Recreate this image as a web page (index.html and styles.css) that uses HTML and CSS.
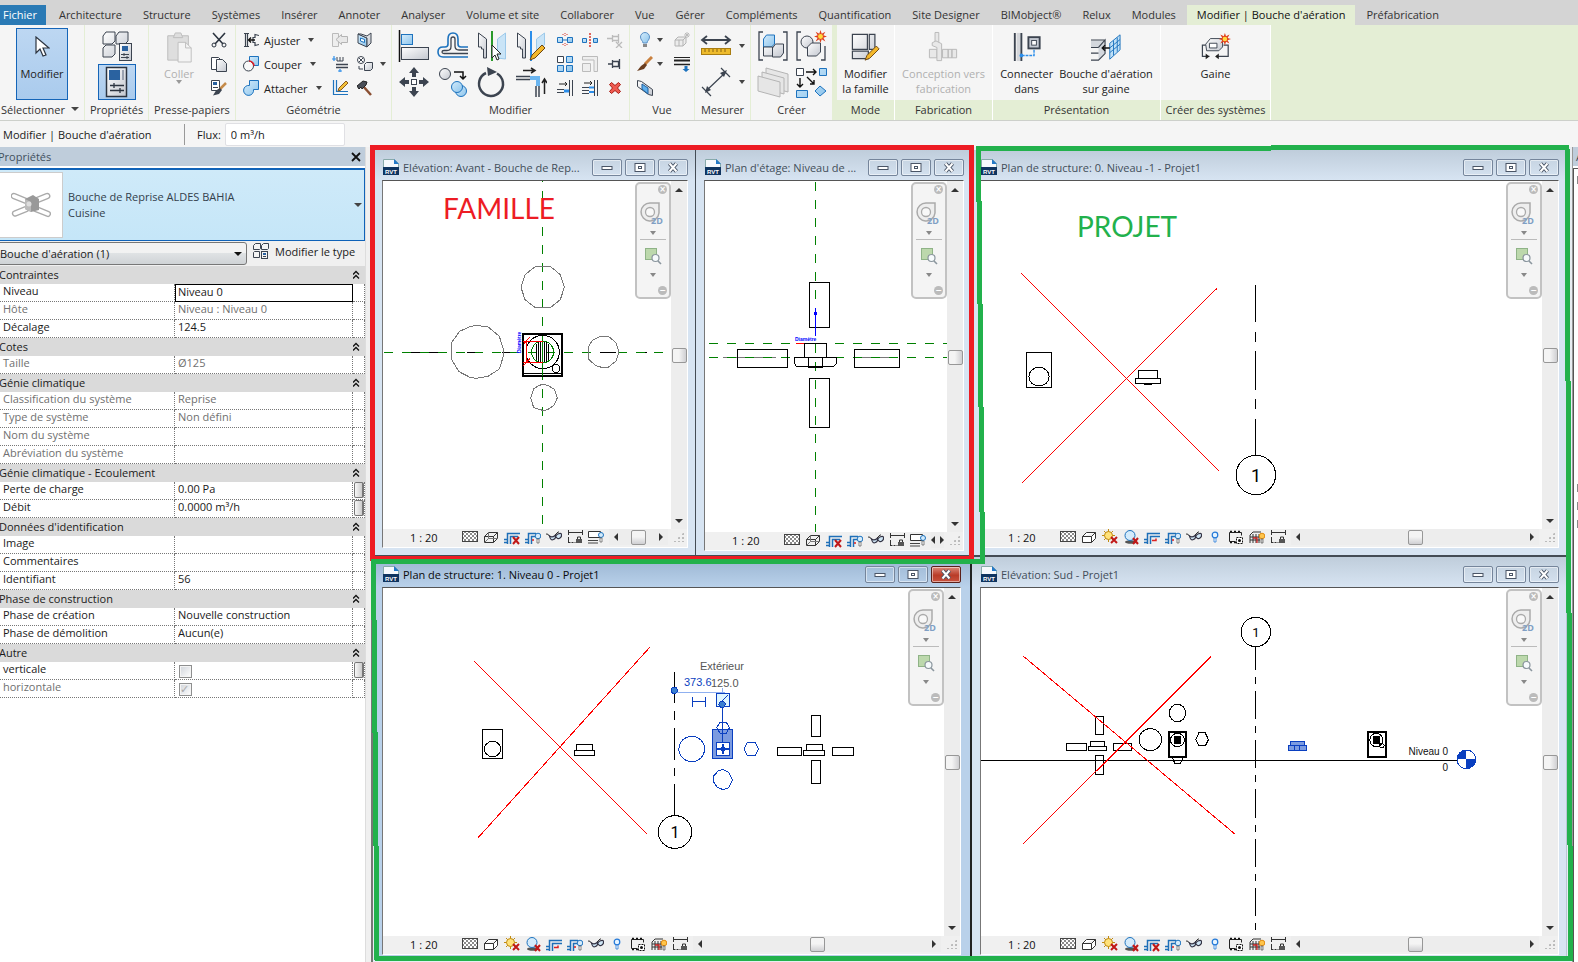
FILE: index.html
```html
<!DOCTYPE html>
<html lang="fr">
<head>
<meta charset="utf-8">
<title>Modifier | Bouche d'aération</title>
<link rel="stylesheet" href="styles.css">
</head>
<body>
<svg class="sprite" aria-hidden="true">
  <defs>
    <linearGradient id="g-grey" x1="0" y1="0" x2="1" y2="1"><stop offset="0" stop-color="#fff"/><stop offset="1" stop-color="#c3c7cf"/></linearGradient>
    <linearGradient id="g-blue" x1="0" y1="0" x2="1" y2="1"><stop offset="0" stop-color="#d5ecfb"/><stop offset="1" stop-color="#8cc4ec"/></linearGradient>
    <pattern id="p-hatch" width="4" height="4" patternUnits="userSpaceOnUse"><path d="M0 0h2v2H0zM2 2h2v2H2z" fill="#8a8a8a"/></pattern>
  </defs>
  <symbol id="cursor" viewBox="0 0 16 22"><path d="M2 1v16l4-4 3 7 3-1-3-7h6z" fill="#fff" stroke="#2c3440" stroke-width="1.2"/></symbol>
  <symbol id="types" viewBox="0 0 32 32"><g fill="url(#g-grey)" stroke="#3c4450"><path d="M2 6l3-4h9v9l-3 3H2zM15 6l3-4h9v9l-3 3h-9zM2 18l3-3h9v9l-3 3H2z"/><rect x="18.500" y="13.500" width="12" height="17"/></g><rect x="21" y="16" width="6" height="5" fill="#2a62a0"/><path d="M20 24.500h8M20 27.500h8M23 23v3M26 26v3" stroke="#3c4450" fill="none"/></symbol>
  <symbol id="types16" viewBox="0 0 16 16"><g fill="#f4f4f4" stroke="#3c4450"><path d="M.5 2.500l2-2h5v5l-1 1h-6zM8.500 2.500l2-2h5v5l-1 1h-6zM.5 9.500l1-1h5v6h-6z"/><rect x="8.500" y="8.500" width="6" height="7"/></g><path d="M10 10h3v2h-3z" fill="#2a62a0"/><path d="M10 13.500h3" stroke="#3c4450"/></symbol>
  <symbol id="props" viewBox="0 0 22 32"><rect x=".5" y="1.500" width="20" height="29" fill="url(#g-grey)" stroke="#2c3440" stroke-width="1.500"/><rect x="3" y="4" width="11" height="10" fill="#2a62a0"/><path d="M16 4h2v10h-2z" fill="#9aa2b0"/><path d="M4 19.500h14M4 24.500h14M8 17v5M14 22v5" stroke="#2c3440" stroke-width="1.300"/></symbol>
  <symbol id="paste" viewBox="0 0 32 34"><g fill="#dedede" stroke="#bdbdbd"><path d="M4 5h22v26H4z"/><path d="M10 7l2-5h6l2 5z"/><path d="M15 12h8l6 6v15H15z" fill="#f4f4f4"/><path d="M23 12v6h6" fill="none"/></g></symbol>
  <symbol id="cut" viewBox="0 0 16 16"><path d="M2 1l10 11M14 1L4 12" stroke="#2c3440" stroke-width="1.600"/><circle cx="3" cy="13" r="2" fill="none" stroke="#2c3440"/><circle cx="13" cy="13" r="2" fill="none" stroke="#2c3440"/></symbol>
  <symbol id="copy" viewBox="0 0 16 16"><path d="M.5 1.500h7l3 3v9H.5z" fill="#fff" stroke="#3c4450"/><path d="M5.500 3.500h6l4 4v8h-10z" fill="url(#g-grey)" stroke="#3c4450"/></symbol>
  <symbol id="match" viewBox="0 0 16 16"><path d="M.5.5h8v10h-8z" fill="#fff" stroke="#3c4450"/><path d="M2 2h4v3H2z" fill="#2a62a0"/><path d="M2 7.500h5" stroke="#3c4450"/><path d="M15 3l-6 6" stroke="#c58b4a" stroke-width="2.500"/><path d="M9 8l2 2-3 4-6 1.500 3-5z" fill="#3c4450"/></symbol>
  <symbol id="cope" viewBox="0 0 16 16"><path d="M1 1.500h5M1 14.500h5M2.500 1.500v13M4.500 1.500v13M16 3.500l-4-1v3h-2v5h2v3l4-1" fill="none" stroke="#3c4450" stroke-width="1.200"/><path d="M12 8H6M8 5.500L5.500 8 8 10.500" fill="none" stroke="#111" stroke-width="1.300"/></symbol>
  <symbol id="cutgeo" viewBox="0 0 16 16"><path d="M6.500.5h9v9h-9z" fill="url(#g-blue)" stroke="#1e73be"/><circle cx="5.500" cy="10" r="5" fill="#f8f8f8" stroke="#3c4450"/><path d="M6 5a5 5 0 015 5" fill="none" stroke="#e01b24" stroke-width="1.500"/></symbol>
  <symbol id="join" viewBox="0 0 16 16"><path d="M6.500.5h9v9h-5a5 5 0 11-4-4z" fill="url(#g-blue)" stroke="#1e73be"/></symbol>
  <symbol id="unjoin" viewBox="0 0 16 16"><path d="M.5 1.500h6v13h-6z" fill="#eee" stroke="#bbb"/><path d="M15.500 4.500h-6v-2L4 7.500l5.500 5v-2h6z" fill="#e8e8e8" stroke="#b4b4b4"/></symbol>
  <symbol id="wallface" viewBox="0 0 16 16"><path d="M1 2l9 4v9l-9-4z" fill="url(#g-blue)" stroke="#3c4450"/><path d="M1 2h3l6 2 4-3v10l-4 4V6z" fill="url(#g-grey)" stroke="#3c4450"/><path d="M3.500 6l4 1.500v3l-4-1.500z" fill="#fff" stroke="#1e73be"/></symbol>
  <symbol id="beam" viewBox="0 0 16 16"><path d="M5 1v4h6V1M8 1v4" stroke="#3c4450" fill="none"/><path d="M4 8.500h12M4 11.500h12" stroke="#3c4450" stroke-width="1.300"/><path d="M2 0v5M0 3h4M8 13v3M6 15h4" stroke="#2c8eea" stroke-width="1.200"/></symbol>
  <symbol id="split-face" viewBox="0 0 16 16"><circle cx="4" cy="4" r="3.500" fill="#fff" stroke="#3c4450"/><path d="M2 2l4 4M6 2L2 6M2 10v3h4" stroke="#3c4450" fill="none"/><path d="M7.500 8.500l2-2h6v6l-2 2h-6z" fill="url(#g-grey)" stroke="#3c4450"/></symbol>
  <symbol id="paint-edge" viewBox="0 0 16 16"><path d="M1.500 0v14.500H16M4.500 0v11.500H16" fill="none" stroke="#1e73be" stroke-width="1.200"/><path d="M14 1l2 2-7 7-3 1 1-3z" fill="#f3c13a" stroke="#8a5a1c"/></symbol>
  <symbol id="hammer" viewBox="0 0 16 16"><path d="M6 6l8 9" stroke="#8a4f32" stroke-width="2.500"/><path d="M0 6l6-5 4 1-1 3-4 4-1-2-2 2z" fill="#4a4f58" stroke="#222"/></symbol>
  <symbol id="align" viewBox="0 0 32 32"><path d="M1.500 0v32" stroke="#111" stroke-width="1.500"/><rect x="3.500" y="4.500" width="11" height="10" fill="url(#g-blue)" stroke="#1e73be"/><rect x="3.500" y="17.500" width="27" height="12" fill="url(#g-grey)" stroke="#3c4450"/></symbol>
  <symbol id="offset" viewBox="0 0 32 32"><path d="M31 27H6q-5 0-5-5t5-5h2q3 0 3-3V9q0-6 5-6t5 6v5q0 3 3 3h7" fill="none" stroke="#1e73be" stroke-width="1.600"/><path d="M31 23.500H7q-2 0-2-1.500t2-1.500h3q4 0 4-4V9q0-2 2-2t2 2v7q0 4 4 4h9" fill="none" stroke="#3c4450" stroke-width="1.300"/></symbol>
  <symbol id="mirror" viewBox="0 0 32 32"><path d="M2.500 3l8 6v19h-3V19h-2v-2h-3z" fill="url(#g-grey)" stroke="#3c4450"/><path d="M29.500 3l-8 6v19l8 1z" fill="#c9e4f7" stroke="#9cc9ea"/><path d="M16 1v30" stroke="#2a9a2a" stroke-width="2"/><path d="M16 15v13l3-3 2 5 2-1-2-5h4z" fill="#fff" stroke="#222"/></symbol>
  <symbol id="mirror2" viewBox="0 0 32 32"><path d="M2.500 3l8 6v19h-3V19h-2v-2h-3z" fill="url(#g-grey)" stroke="#3c4450"/><path d="M29.500 3l-8 6v12l8-6z" fill="#c9e4f7" stroke="#9cc9ea"/><path d="M16 1v30" stroke="#2c8eea" stroke-width="2"/><path d="M27 15l3 3-10 10-5 2 2-5z" fill="#f3b72a" stroke="#6b4512"/></symbol>
  <symbol id="move" viewBox="0 0 32 32"><g fill="#3c4450"><path d="M16 1l5 6h-3v4h-4V7h-3zM16 31l5-6h-3v-4h-4v4h-3zM1 16l6-5v3h4v4H7v3zM31 16l-6-5v3h-4v4h4v3z"/></g><rect x="13.500" y="13.500" width="5" height="5" fill="#fff" stroke="#3c4450"/></symbol>
  <symbol id="copyel" viewBox="0 0 32 32"><circle cx="8" cy="8" r="5.500" fill="url(#g-grey)" stroke="#3c4450"/><path d="M17 6h9v6M23 10l3 3 3-3" fill="none" stroke="#111" stroke-width="1.500"/><circle cx="24" cy="25" r="5.500" fill="url(#g-blue)" stroke="#1e73be"/><circle cx="20" cy="21" r="5.500" fill="url(#g-blue)" stroke="#1e73be"/></symbol>
  <symbol id="rotate" viewBox="0 0 32 32"><path d="M21 7.500A12 12 0 1110 7" fill="none" stroke="#3c4450" stroke-width="2.500"/><path d="M11 1l10 5-9 4z" fill="#3c4450"/></symbol>
  <symbol id="trim" viewBox="0 0 32 32"><path d="M8 4.500h12M16 2l4 2.500L16 7" stroke="#222" fill="none" stroke-width="1.500"/><path d="M1 10.500h14M1 13.500h14M21 20v11M24 20v11" stroke="#3c4450" stroke-width="1.500"/><path d="M15 12h8v8" fill="none" stroke="#6ab5f0" stroke-width="4"/><path d="M29.500 28V14M27 17l2.500-4 2.500 4" stroke="#222" fill="none" stroke-width="1.500"/></symbol>
  <symbol id="split" viewBox="0 0 16 16"><path d="M.5 5.500h5v5h-5zM10.500 5.500h5v5h-5z" fill="url(#g-blue)" stroke="#1e73be"/><path d="M6 8h4" stroke="#1e73be"/><path d="M8 1v4M8 11v4M6 2v2M10 2v2M6 12v2M10 12v2" stroke="#d9372c" stroke-dasharray="1 1"/></symbol>
  <symbol id="splitgap" viewBox="0 0 16 16"><path d="M.5 6.500h4v4h-4zM11.500 6.500h4v4h-4z" fill="url(#g-blue)" stroke="#1e73be"/><path d="M8 1v14" stroke="#d9372c" stroke-width="1.500" stroke-dasharray="2 1"/></symbol>
  <symbol id="unpin" viewBox="0 0 16 16"><path d="M0 6.500h5M5.500 3v7M5.500 4.500h6v4h-6M11.500 2v9M9 10l6 6M15 10l-6 6" stroke="#bbb" fill="none" stroke-width="1.300"/></symbol>
  <symbol id="array" viewBox="0 0 16 16"><path d="M.5.5h6v6h-6z" fill="#fff" stroke="#3c4450"/><path d="M9.500.5h6v6h-6zM.5 9.500h6v6h-6zM9.500 9.500h6v6h-6z" fill="url(#g-blue)" stroke="#1e73be"/></symbol>
  <symbol id="scale" viewBox="0 0 16 16"><path d="M.5.5h15v15H12V4H.5zM.5 7.500h8v8h-8z" fill="#eee" stroke="#bbb"/></symbol>
  <symbol id="pin" viewBox="0 0 16 16"><path d="M1 8h4M5.500 4v8M5.500 5.500h6v5h-6M12.500 3v10" stroke="#3c4450" fill="none" stroke-width="1.300"/></symbol>
  <symbol id="trim1" viewBox="0 0 16 16"><path d="M12.500 0v16M15.500 0v16M0 9.500h7M0 12.500h7" stroke="#3c4450"/><path d="M7 11h5" stroke="#2c8eea" stroke-width="3"/><path d="M2 4h8M8 2l2 2-2 2" stroke="#222" fill="none"/></symbol>
  <symbol id="trim2" viewBox="0 0 16 16"><path d="M12.500 0v16M15.500 0v16M0 7.500h7M0 10.500h7M0 13.500h7" stroke="#3c4450"/><path d="M7 7.500h5M7 12h5" stroke="#2c8eea" stroke-width="2"/><path d="M2 3h8M8 1l2 2-2 2" stroke="#222" fill="none"/></symbol>
  <symbol id="delete" viewBox="0 0 16 16"><path d="M4.500 2.500L8 5.500l3.500-3 2 2L10.500 8l3 3.500-2 2L8 10.500l-3.500 3-2-2L5.500 8l-3-3.500z" fill="#ef5a50" stroke="#a81c14"/></symbol>
  <symbol id="bulb" viewBox="0 0 16 16"><path d="M6 11c0-2-2.500-3-2.500-6a4.500 4.500 0 019 0c0 3-2.500 4-2.500 6z" fill="url(#g-blue)" stroke="#5a8fc4"/><path d="M6 12h4v3H6z" fill="#888"/></symbol>
  <symbol id="boxstar" viewBox="0 0 16 16"><path d="M1 8l3-3h8v6l-3 3H1zM1 8h8v6M9 8l3-3M5 8v6" fill="#ececec" stroke="#b4b4b4"/><path d="M13 0v6M10 3h6M11 1l4 4M15 1l-4 4" stroke="#bbb"/></symbol>
  <symbol id="brush" viewBox="0 0 16 16"><path d="M15 1L8 8" stroke="#c9803e" stroke-width="3"/><path d="M8 7l2 2-3 4-7 2 4-5z" fill="#6a3d1f"/></symbol>
  <symbol id="linew" viewBox="0 0 16 16"><path d="M0 1.500h16" stroke="#222"/><path d="M0 4.500h16" stroke="#222" stroke-width="2"/><path d="M0 8.500h16" stroke="#222" stroke-width="1.500"/><path d="M10.500 10h3v3h2L12 16l-3.500-3h2z" fill="#1e73be"/></symbol>
  <symbol id="section" viewBox="0 0 16 16"><path d="M.5.5l4 1 11 8v6l-4-1-11-8z" fill="url(#g-grey)" stroke="#3c4450"/><path d="M5 4l6 4v6L5 9z" fill="#5fb0ee" stroke="#1e5f9e"/></symbol>
  <symbol id="ruler" viewBox="0 0 32 32"><path d="M2 10h28M7 6l-5 4 5 4M25 6l5 4-5 4" stroke="#3c4450" stroke-width="1.800" fill="none"/><rect x="1.500" y="18.500" width="29" height="6" fill="#eebb2c" stroke="#a97d12"/><path d="M5 19v3M9 19v3M13 19v3M17 19v3M21 19v3M25 19v3" stroke="#8a6410"/></symbol>
  <symbol id="dim" viewBox="0 0 32 32"><path d="M6 25L26 6M2 21l9 9M21 2l9 9" stroke="#3c4450" stroke-width="1.200"/><path d="M5 27l2-7 4 4zM27 4l-7 3 4 4z" fill="#3c4450"/></symbol>
  <symbol id="group" viewBox="0 0 32 32"><path d="M6 2H2v28h4M26 2h4v28h-4" fill="none" stroke="#3c4450" stroke-width="1.300"/><path d="M6.500 9l3-4h8v9l-3 3h-8z" fill="url(#g-blue)" stroke="#1e73be"/><path d="M6.500 17h9v9h-9zM15.500 18l3-4h8v9l-3 4h-8z" fill="url(#g-grey)" stroke="#3c4450"/></symbol>
  <symbol id="newgroup" viewBox="0 0 32 32"><path d="M6 2H2v28h4M26 30h4V16" fill="none" stroke="#3c4450" stroke-width="1.300"/><circle cx="12" cy="12" r="6" fill="url(#g-grey)" stroke="#3c4450"/><path d="M12.500 17l4-4h9v9l-4 4h-9z" fill="url(#g-grey)" stroke="#3c4450"/><use href="#spark" x="19" y="0" width="13" height="13"/></symbol>
  <symbol id="spark" viewBox="0 0 16 16"><path d="M8 0l1.500 4.500L14 2l-2.500 4.500L16 8l-4.500 1.500L14 14l-4.500-2.500L8 16l-1.500-4.500L2 14l2.500-4.500L0 8l4.500-1.500L2 2l4.500 2.500z" fill="#e0401c"/><circle cx="8" cy="8" r="3" fill="#ffd93b"/></symbol>
  <symbol id="sheets" viewBox="0 0 32 32"><g fill="#e6e6e6" stroke="#b4b4b4"><path d="M9 2l22 6v18L9 20z"/><path d="M5 6l22 6v16L5 22z"/><path d="M1 10l22 6v15L1 25z"/></g></symbol>
  <symbol id="mapel" viewBox="0 0 32 32"><path d="M1.500 2.500h7v7h-7z" fill="#fff" stroke="#3c4450"/><path d="M24.500 2.500h7v7h-7zM1.500 24.500h11v7h-11zM25 20l6 5-6 5-5-5z" fill="url(#g-blue)" stroke="#1e73be"/><path d="M11 6h10M18 3l3 3-3 3M5 12v9M2 18l3 3 3-3M12 11l7 7M19 14v4h-4" fill="none" stroke="#111" stroke-width="1.400"/></symbol>
  <symbol id="editfam" viewBox="0 0 32 32"><path d="M1.500 2.500h16v16h-16zM19.500 2.500h6v16h-6zM1.500 20.500h17v8h-17z" fill="url(#g-grey)" stroke="#3c4450" stroke-width="1.300"/><path d="M27 15l3 3-10 10-5 2 2-5z" fill="#f3b72a" stroke="#6b4512"/></symbol>
  <symbol id="fab" viewBox="0 0 32 32"><g fill="#e8e8e8" stroke="#b8b8b8"><path d="M7.500.5h4v14h-4zM1.500 18.500h8v9h-8zM15.500 18.500h6v9h-6zM21.500 18.500h4v9h-4zM25.500 18.500h5v9h-5z"/><path d="M4.500 11.500l4-2 6 3v18h-5v-14l-5-2z"/></g></symbol>
  <symbol id="connect" viewBox="0 0 32 32"><path d="M5 1h4v30H5z" fill="#d4d6da"/><path d="M3 1v30M10 1v30" stroke="#3c4450" stroke-width="2"/><rect x="17.500" y="5.500" width="12" height="12" fill="#c5cad3" stroke="#3c4450" stroke-width="2"/><rect x="21" y="9" width="5" height="5" fill="#fff" stroke="#3c4450"/><path d="M23.500 19v6H10" stroke="#2c8eea" stroke-width="1.500" stroke-dasharray="3 1" fill="none"/><circle cx="10" cy="25" r="2" fill="#2c8eea"/></symbol>
  <symbol id="airterm" viewBox="0 0 32 32"><path d="M0 9h15v14l-7 7V17H0z" fill="#d3d7dd"/><path d="M0 8.500h15M0 16.500h8M0 22.500h8M0 30h8l7-7V8.500l-7 8" fill="none" stroke="#3c4450" stroke-width="1.200"/><path d="M20 12l11-9v16l-11 10z" fill="#bfe0f7" stroke="#1e73be"/><path d="M20 17l11-9M20 22l11-9M24 9v16M28 6v15" stroke="#1e73be"/><path d="M20 17h-8M15 14l-3 3 3 3" stroke="#111" fill="none" stroke-width="1.500"/></symbol>
  <symbol id="duct" viewBox="0 0 32 32"><path d="M5 13l5-6h13v9l-4 4H6z" fill="url(#g-grey)" stroke="#3c4450"/><path d="M9 12h8v5H9z" fill="#fff" stroke="#3c4450"/><path d="M5 14H1.500v12H9M24 14h5v12H16" fill="none" stroke="#3c4450" stroke-width="1.300"/><path d="M5 23l4 3-4 3zM19 23l-4 3 4 3z" fill="#222"/><use href="#spark" x="19" y="1" width="13" height="13"/></symbol>

  <symbol id="rvt" viewBox="0 0 16 16"><path d="M.5.5h11l4 4v11H.5z" fill="#f6f9fd" stroke="#8aa"/><path d="M11 0l5 5h-5z" fill="#2479c8"/><path d="M0 8h16v8H0z" fill="#0f3460"/></symbol>
  <symbol id="s-detail" viewBox="0 0 16 16"><rect x=".5" y="2.500" width="15" height="10" fill="#fff" stroke="#444"/><rect x="1" y="3" width="14" height="9" fill="url(#p-hatch)"/></symbol>
  <symbol id="s-box" viewBox="0 0 16 16"><path d="M1.500 7.500l4-4h9v6l-4 4h-9zM1.500 7.500h9l4-4M10.500 7.500v6" fill="none" stroke="#333"/><path d="M5.500 3.500v6h9M5.500 9.500l-4 4" fill="none" stroke="#777"/></symbol>
  <symbol id="s-solid" viewBox="0 0 16 16"><path d="M1.500 7.500l4-4h9v6l-4 4h-9zM1.500 7.500h9l4-4M10.500 7.500v6" fill="#fff" stroke="#333"/></symbol>
  <symbol id="s-sun" viewBox="0 0 16 16"><path d="M6.500 0v13M0 6.500h13M2 2l9 9M11 2l-9 9" stroke="#c08a10"/><circle cx="6.500" cy="6.500" r="4" fill="#ffe27a" stroke="#c08a10"/><path d="M9 8l6 6M15 8l-6 6" stroke="#c01818" stroke-width="2"/></symbol>
  <symbol id="s-shadow" viewBox="0 0 16 16"><ellipse cx="8" cy="13" rx="6" ry="1.800" fill="#555"/><circle cx="7" cy="6.500" r="5" fill="#d4ebfb" stroke="#1e73be"/><path d="M10 9l5 6M15 9l-5 6" stroke="#c01818" stroke-width="2"/></symbol>
  <symbol id="s-crop" viewBox="0 0 16 16"><path d="M3.500 15V4.500H16M6.500 15V7.500H16M0 10.500h3M0 13.500h3" fill="none" stroke="#1e6fb8" stroke-width="1.500"/><path d="M8 11.500h4v-2" stroke="#d22" stroke-width="1.500" fill="none"/></symbol>
  <symbol id="s-cropx" viewBox="0 0 16 16"><path d="M3.500 15V4.500H16M6.500 15V7.500H14M0 10.500h3M0 13.500h3" fill="none" stroke="#1e6fb8" stroke-width="1.500"/><path d="M9 8l6 7M15 8l-6 7" stroke="#c01818" stroke-width="2"/></symbol>
  <symbol id="s-cropb" viewBox="0 0 16 16"><path d="M3.500 15V4.500H11M6.500 15V7.500H10M0 10.500h3M0 13.500h3" fill="none" stroke="#1e6fb8" stroke-width="1.500"/><path d="M7 11h2" stroke="#d22" stroke-width="1.500"/><circle cx="13" cy="7" r="2.800" fill="#d4ebfb" stroke="#1e73be"/><path d="M12 10h2v4h-2z" fill="#fff" stroke="#555" stroke-width=".7"/></symbol>
  <symbol id="s-glass" viewBox="0 0 16 16"><path d="M0 5q2-1 4 3M9 6l3-3h1" stroke="#333" fill="none"/><path d="M3.500 7q1 5 4 3.500t1.500-4q-3 2.500-5.500.5zM9.500 7q2 4 4.500 2t1-4.500q-3-.5-5.500 2.500z" fill="#cfe6f6" stroke="#334" stroke-width="1.200"/></symbol>
  <symbol id="s-bulb" viewBox="0 0 16 16"><circle cx="8" cy="6" r="2.800" fill="#e6f4ff" stroke="#2479d8" stroke-width="1.200"/><path d="M7 9h2v4H7z" fill="#fff" stroke="#2479d8" stroke-width=".8"/></symbol>
  <symbol id="s-film" viewBox="0 0 16 16"><path d="M1.500 3.500h12v3M1.500 3.500v9h6" stroke="#222" fill="none"/><path d="M2 2.500h12M2 13.500h6" stroke="#111" stroke-width="1.500" stroke-dasharray="2 2" fill="none"/><rect x="8.500" y="8.500" width="6" height="6" fill="#fff" stroke="#111" stroke-dasharray="2 1"/><circle cx="11.500" cy="11.500" r="1.500" fill="#111"/></symbol>
  <symbol id="s-fence" viewBox="0 0 16 16"><path d="M1 14V6l3-3h8M4 14V5M7 14V5M10 14V5M1 8h10M1 11h10" stroke="#333" fill="none"/><path d="M4 9h4v5" stroke="#c22" fill="none" stroke-width="1.300"/><circle cx="13" cy="7" r="2.800" fill="#ffc54a" stroke="#e08a10"/><path d="M12 10h2v4h-2z" fill="#ddd" stroke="#555" stroke-width=".7"/></symbol>
  <symbol id="s-lock" viewBox="0 0 16 16"><path d="M1.500 1v5M15.500 1v5M2 3.500h13M1.500 8v6" stroke="#333" fill="none"/><path d="M1.500 13.500h7" stroke="#333" stroke-dasharray="2 1"/><path d="M9 10h6v4H9z" fill="#555"/><path d="M10.500 10V8h3v2" stroke="#333" fill="none"/></symbol>
  <symbol id="s-prop" viewBox="0 0 16 16"><path d="M.5 2.500h12v6H.5z" fill="#fff" stroke="#333"/><path d="M0 11.500h10M0 14h10" stroke="#444"/><circle cx="13" cy="6" r="2.500" fill="#d4ebfb" stroke="#1e73be"/><path d="M12 9h2v4h-2z" fill="#fff" stroke="#555" stroke-width=".7"/></symbol>

  <symbol id="w-min" viewBox="0 0 28 15"><rect x="9" y="6.500" width="10" height="3" fill="#fff" stroke="#4a5566"/></symbol>
  <symbol id="w-max" viewBox="0 0 28 15"><rect x="9" y="3.500" width="10" height="8" fill="#fff" stroke="#4a5566"/><rect x="12.500" y="6.500" width="3" height="2" fill="#fff" stroke="#4a5566"/></symbol>
  <symbol id="w-close" viewBox="0 0 28 15"><path d="M10.500 3.500l7 8M17.500 3.500l-7 8" stroke="#4a5566" stroke-width="4"/><path d="M10.500 3.500l7 8M17.500 3.500l-7 8" stroke="#fff" stroke-width="2"/></symbol>
  <symbol id="chev" viewBox="0 0 8 10"><path d="M1 4.500l3-3 3 3M1 8.500l3-3 3 3" fill="none" stroke="#111" stroke-width="1.300"/></symbol>
  <symbol id="wheel" viewBox="0 0 26 24"><path d="M10 1h9v10a9 9 0 11-9-10z" fill="#eee" stroke="#aaa" stroke-width="1.500"/><circle cx="10" cy="10" r="4.500" fill="#f8f8f8" stroke="#aaa" stroke-width="1.300"/></symbol>
  <symbol id="zoomsq" viewBox="0 0 18 18"><rect x="1.500" y="1.500" width="11" height="11" fill="#bcd8ac" stroke="#8fb387"/><circle cx="11.500" cy="11" r="3.500" fill="#f6fafc" stroke="#8b969e" stroke-width="1.200"/><path d="M14 14l3 3" stroke="#8b969e" stroke-width="1.600"/></symbol>
</svg>

<nav class="tabs" aria-label="Ruban">
  <button class="tab file">Fichier</button><button class="tab">Architecture</button><button class="tab">Structure</button><button class="tab">Systèmes</button><button class="tab">Insérer</button><button class="tab">Annoter</button><button class="tab">Analyser</button><button class="tab">Volume et site</button><button class="tab">Collaborer</button><button class="tab">Vue</button><button class="tab">Gérer</button><button class="tab">Compléments</button><button class="tab">Quantification</button><button class="tab">Site Designer</button><button class="tab">BIMobject®</button><button class="tab">Relux</button><button class="tab">Modules</button><button class="tab current">Modifier | Bouche d'aération</button><button class="tab">Préfabrication</button>
</nav>

<div class="ribbon">
  <section class="panel">
    <div class="tools center"><button class="big pressed"><svg class="i-cur"><use href="#cursor"/></svg><span>Modifier</span></button></div>
    <h2 class="select-title">Sélectionner <i class="tri"></i></h2>
  </section>
  <section class="panel">
    <div class="tools stack"><button class="large" aria-label="Propriétés du type"><svg><use href="#types"/></svg></button><button class="large pressed" aria-label="Propriétés"><svg><use href="#props"/></svg></button></div>
    <h2>Propriétés</h2>
  </section>
  <section class="panel">
    <div class="tools paste-tools"><button class="big off"><svg class="i32"><use href="#paste"/></svg><span>Coller</span><i class="tri"></i></button>
      <div class="col"><button class="small" aria-label="Couper"><svg><use href="#cut"/></svg></button><button class="small" aria-label="Copier"><svg><use href="#copy"/></svg></button><button class="small" aria-label="Copier le type"><svg><use href="#match"/></svg></button></div></div>
    <h2>Presse-papiers</h2>
  </section>
  <section class="panel">
    <div class="tools geo-tools">
      <div class="col wide"><button class="line"><svg><use href="#cope"/></svg>Ajuster<i class="tri"></i></button><button class="line"><svg><use href="#cutgeo"/></svg>Couper<i class="tri"></i></button><button class="line"><svg><use href="#join"/></svg>Attacher<i class="tri"></i></button></div>
      <div class="col"><button class="small" aria-label="Détacher"><svg><use href="#unjoin"/></svg></button><button class="small" aria-label="Poutre"><svg><use href="#beam"/></svg></button><button class="small" aria-label="Peindre"><svg><use href="#paint-edge"/></svg></button></div>
      <div class="col"><button class="small" aria-label="Face"><svg><use href="#wallface"/></svg></button><button class="small" aria-label="Scinder la face"><svg><use href="#split-face"/></svg></button><button class="small" aria-label="Démolir"><svg><use href="#hammer"/></svg></button></div>
      <i class="tri"></i>
    </div>
    <h2>Géométrie</h2>
  </section>
  <section class="panel">
    <div class="tools modify-tools">
      <div class="larges"><button class="large" aria-label="Aligner"><svg><use href="#align"/></svg></button><button class="large" aria-label="Décaler"><svg><use href="#offset"/></svg></button><button class="large" aria-label="Symétrie par axe"><svg><use href="#mirror"/></svg></button><button class="large" aria-label="Symétrie dessinée"><svg><use href="#mirror2"/></svg></button><button class="large" aria-label="Déplacer"><svg><use href="#move"/></svg></button><button class="large" aria-label="Copier"><svg><use href="#copyel"/></svg></button><button class="large" aria-label="Rotation"><svg><use href="#rotate"/></svg></button><button class="large" aria-label="Ajuster en angle"><svg><use href="#trim"/></svg></button></div>
      <div class="smalls"><button class="small" aria-label="Scinder"><svg><use href="#split"/></svg></button><button class="small" aria-label="Scinder avec espace"><svg><use href="#splitgap"/></svg></button><button class="small" aria-label="Déverrouiller"><svg><use href="#unpin"/></svg></button><button class="small" aria-label="Réseau"><svg><use href="#array"/></svg></button><button class="small" aria-label="Echelle"><svg><use href="#scale"/></svg></button><button class="small" aria-label="Verrouiller"><svg><use href="#pin"/></svg></button><button class="small" aria-label="Prolonger"><svg><use href="#trim1"/></svg></button><button class="small" aria-label="Prolonger plusieurs"><svg><use href="#trim2"/></svg></button><button class="small" aria-label="Supprimer"><svg><use href="#delete"/></svg></button></div>
    </div>
    <h2>Modifier</h2>
  </section>
  <section class="panel">
    <div class="tools view-tools"><button class="small" aria-label="Masquer"><svg><use href="#bulb"/></svg></button><i class="tri"></i><button class="small" aria-label="Zone de sélection"><svg><use href="#boxstar"/></svg></button><button class="small" aria-label="Remplacer"><svg><use href="#brush"/></svg></button><i class="tri"></i><button class="small" aria-label="Lignes"><svg><use href="#linew"/></svg></button><button class="small" aria-label="Coupe"><svg><use href="#section"/></svg></button></div>
    <h2>Vue</h2>
  </section>
  <section class="panel">
    <div class="tools measure-tools"><button class="large" aria-label="Mesurer"><svg><use href="#ruler"/></svg></button><i class="tri"></i><button class="large" aria-label="Cote"><svg><use href="#dim"/></svg></button><i class="tri"></i></div>
    <h2>Mesurer</h2>
  </section>
  <section class="panel">
    <div class="tools create-tools"><button class="large" aria-label="Groupe"><svg><use href="#group"/></svg></button><button class="large" aria-label="Créer similaire"><svg><use href="#newgroup"/></svg></button><button class="large" aria-label="Assemblage"><svg><use href="#sheets"/></svg></button><button class="large" aria-label="Pièces"><svg><use href="#mapel"/></svg></button></div>
    <h2>Créer</h2>
  </section>
  <section class="panel context">
    <div class="tools center"><button class="big"><svg class="i32"><use href="#editfam"/></svg><span>Modifier<br>la famille</span></button></div>
    <h2>Mode</h2>
  </section>
  <section class="panel context">
    <div class="tools center"><button class="big off"><svg class="i32"><use href="#fab"/></svg><span>Conception vers<br>fabrication</span></button></div>
    <h2>Fabrication</h2>
  </section>
  <section class="panel context">
    <div class="tools center"><button class="big"><svg class="i32"><use href="#connect"/></svg><span>Connecter<br>dans</span></button><button class="big"><svg class="i32"><use href="#airterm"/></svg><span>Bouche d'aération<br>sur gaine</span></button></div>
    <h2>Présentation</h2>
  </section>
  <section class="panel context">
    <div class="tools center"><button class="big"><svg class="i32"><use href="#duct"/></svg><span>Gaine</span></button></div>
    <h2>Créer des systèmes</h2>
  </section>
</div>

<div class="options"><span class="mode">Modifier | Bouche d'aération</span><label for="flux">Flux:</label><input id="flux" type="text" value="0 m³/h"></div>

<main class="main">
  <aside class="props">
    <header class="dock-title"><h2>Propriétés</h2><button aria-label="Fermer"><svg viewBox="0 0 10 10"><path d="M1 1l8 8M9 1L1 9" stroke="#111" stroke-width="1.800"/></svg></button></header>
    <button class="type">
      <span class="thumb"><svg viewBox="0 0 40 26"><g fill="#fff" stroke="#aaa" stroke-width="1.400"><rect x="0" y="4" width="18" height="5" rx="2.500" transform="rotate(22 9 6)"/><rect x="22" y="4" width="17" height="5" rx="2.500" transform="rotate(-22 30 6)"/><rect x="1" y="17" width="17" height="5" rx="2.500" transform="rotate(-22 9 19)"/><rect x="22" y="17" width="18" height="5" rx="2.500" transform="rotate(22 31 19)"/></g><path d="M14 7l8-4 6 4v11l-8 2-6-3z" fill="#999"/><path d="M14 7l6 3v10l-6-3z" fill="#bbb"/><circle cx="18" cy="12" r="2.500" fill="#ddd"/></svg></span>
      <span class="type-name">Bouche de Reprise ALDES BAHIA<br>Cuisine</span><i class="tri"></i>
    </button>
    <div class="filter">
      <span class="combo"><select aria-label="Filtre de catégorie"><option>Bouche d'aération (1)</option></select><i class="tri"></i></span>
      <button class="edit-type"><svg><use href="#types16"/></svg>Modifier le type</button>
    </div>
    <table class="params">
      <colgroup><col class="c-name"><col><col class="c-btn"></colgroup>
      <tbody>
      <tr class="group"><th colspan="2">Contraintes</th><td><svg><use href="#chev"/></svg></td></tr>
      <tr><th><label for="p1">Niveau</label></th><td class="focus"><input id="p1" value="Niveau 0"></td><td></td></tr>
      <tr class="ro"><th>Hôte</th><td>Niveau : Niveau 0</td><td></td></tr>
      <tr><th><label for="p2">Décalage</label></th><td><input id="p2" value="124.5"></td><td></td></tr>
      <tr class="group"><th colspan="2">Cotes</th><td><svg><use href="#chev"/></svg></td></tr>
      <tr class="ro"><th>Taille</th><td>Ø125</td><td></td></tr>
      <tr class="group"><th colspan="2">Génie climatique</th><td><svg><use href="#chev"/></svg></td></tr>
      <tr class="ro"><th>Classification du système</th><td>Reprise</td><td></td></tr>
      <tr class="ro"><th>Type de système</th><td>Non défini</td><td></td></tr>
      <tr class="ro"><th>Nom du système</th><td></td><td></td></tr>
      <tr class="ro"><th>Abréviation du système</th><td></td><td></td></tr>
      <tr class="group"><th colspan="2">Génie climatique - Ecoulement</th><td><svg><use href="#chev"/></svg></td></tr>
      <tr><th><label for="p3">Perte de charge</label></th><td><input id="p3" value="0.00 Pa"></td><td><button class="assoc" aria-label="Associer la perte de charge"></button></td></tr>
      <tr><th><label for="p4">Débit</label></th><td><input id="p4" value="0.0000 m³/h"></td><td><button class="assoc" aria-label="Associer le débit"></button></td></tr>
      <tr class="group"><th colspan="2">Données d'identification</th><td><svg><use href="#chev"/></svg></td></tr>
      <tr><th><label for="p5">Image</label></th><td><input id="p5"></td><td></td></tr>
      <tr><th><label for="p6">Commentaires</label></th><td><input id="p6"></td><td></td></tr>
      <tr><th><label for="p7">Identifiant</label></th><td><input id="p7" value="56"></td><td></td></tr>
      <tr class="group"><th colspan="2">Phase de construction</th><td><svg><use href="#chev"/></svg></td></tr>
      <tr><th><label for="p8">Phase de création</label></th><td><input id="p8" value="Nouvelle construction"></td><td></td></tr>
      <tr><th><label for="p9">Phase de démolition</label></th><td><input id="p9" value="Aucun(e)"></td><td></td></tr>
      <tr class="group"><th colspan="2">Autre</th><td><svg><use href="#chev"/></svg></td></tr>
      <tr><th><label for="p10">verticale</label></th><td><input id="p10" type="checkbox"></td><td><button class="assoc" aria-label="Associer verticale"></button></td></tr>
      <tr class="ro"><th><label for="p11">horizontale</label></th><td><input id="p11" type="checkbox" checked disabled></td><td></td></tr>
      </tbody>
    </table>
  </aside>

  <div class="mdi">
    <section class="win w1">
      <header class="bar"><svg class="doc"><use href="#rvt"/><text x="8" y="15">RVT</text></svg><h3>Elévation: Avant - Bouche de Rep...</h3><button aria-label="Réduire"><svg><use href="#w-min"/></svg></button><button aria-label="Agrandir"><svg><use href="#w-max"/></svg></button><button aria-label="Fermer"><svg><use href="#w-close"/></svg></button></header>
      <div class="client">
        <div class="view">
          <svg class="canvas"><g transform="translate(-13 -36) scale(.33333)">
            <path class="ref" d="M42 622H880M518 84V1140"/>
            <path class="ink" d="M123 622h27M177 622h27M290 622h25M395 622h25M690 622h48M825 622h6"/>
            <g class="soft"><path d="M497 364h44l30 25 12 38-12 37-30 24h-45l-31-24-12-37 12-38zM300 545l20-4 35 5 33 28 12 38v22l-12 38-34 22-35 6-17-2-35-18-22-36V592l24-33zM686 576l15-3 17 3 20 17 9 28-9 27-22 18-17 2-22-6-22-20V606l12-20zM507 721l14-3 12 3 20 12 9 25-9 22-20 14-12 3-30-9-9-30 9-26z"/></g>
            <rect x="460" y="567" width="117" height="126" class="ink2"/><path class="ink" d="M460 687h117"/>
            <circle cx="518" cy="621" r="50" class="ink"/><circle cx="558" cy="670" r="12" class="ink"/>
            <path class="ink" d="M499 597v48M505 592v58M511 590v62M524 590v62M530 592v58M536 597v48"/>
            <circle cx="518" cy="621" r="33" class="refc"/><path class="refc" d="M518 572v120"/>
            <path class="red" d="M460 590h58M460 653h58M470 590v63M462 596l18-20M460 662l20-22"/>
          </g><text x="0" y="0" transform="translate(138 172) rotate(-90)" class="tiny">Diamètre</text></svg>
          <strong class="stamp famille">FAMILLE</strong>
          <div class="navbar"><i class="dot">×</i><svg class="wheel"><use href="#wheel"/><text x="11" y="22">2D</text></svg><i class="tri"></i><hr><svg class="zsq"><use href="#zoomsq"/></svg><i class="tri"></i><i class="dot last">−</i></div>
        </div>
        <div class="vscroll"><i class="up"></i><i class="knob"></i><i class="down"></i></div>
        <footer class="status"><span>1 : 20</span><svg><use href="#s-detail"/></svg><svg><use href="#s-box"/></svg><svg><use href="#s-cropx"/></svg><svg><use href="#s-cropb"/></svg><svg><use href="#s-glass"/></svg><svg><use href="#s-lock"/></svg><svg><use href="#s-prop"/></svg><div class="hscroll"><i class="left"></i><i class="knob"></i><i class="right"></i></div><i class="grip"></i></footer>
      </div>
    </section>

    <section class="win w2">
      <header class="bar"><svg class="doc"><use href="#rvt"/><text x="8" y="15">RVT</text></svg><h3>Plan d'étage: Niveau de ...</h3><button aria-label="Réduire"><svg><use href="#w-min"/></svg></button><button aria-label="Agrandir"><svg><use href="#w-max"/></svg></button><button aria-label="Fermer"><svg><use href="#w-close"/></svg></button></header>
      <div class="client">
        <div class="view">
          <svg class="canvas"><g transform="translate(-15 -36) scale(.33333)">
            <path class="ref" d="M57 595H771M57 637H771M376 111V1160"/>
            <path class="soft" d="M98 637h13M138 637h27M192 637h27M246 637h12M516 637h27M570 637h27"/>
            <g class="ink"><rect x="358" y="412" width="61" height="136"/><rect x="142" y="613" width="151" height="54"/><rect x="493" y="613" width="136" height="54"/><rect x="358" y="700" width="61" height="147"/><path d="M343 637v-42h67v42M313 637h126v18l-8 10H320l-7-10zM355 637h43v30h-43z"/></g>
            <path class="blue" d="M376 490v82"/><rect x="372" y="501" width="9" height="9" fill="#00f"/><path class="red" d="M318 595h25"/>
          </g><text x="90" y="160" class="tiny">Diamètre</text></svg>
          <div class="navbar"><i class="dot">×</i><svg class="wheel"><use href="#wheel"/><text x="11" y="22">2D</text></svg><i class="tri"></i><hr><svg class="zsq"><use href="#zoomsq"/></svg><i class="tri"></i><i class="dot last">−</i></div>
        </div>
        <div class="vscroll"><i class="up"></i><i class="knob"></i><i class="down"></i></div>
        <footer class="status"><span>1 : 20</span><svg><use href="#s-detail"/></svg><svg><use href="#s-box"/></svg><svg><use href="#s-cropx"/></svg><svg><use href="#s-cropb"/></svg><svg><use href="#s-glass"/></svg><svg><use href="#s-lock"/></svg><svg><use href="#s-prop"/></svg><div class="hscroll tight"><i class="left"></i><i class="right"></i></div><i class="grip"></i></footer>
      </div>
    </section>

    <section class="win w3">
      <header class="bar"><svg class="doc"><use href="#rvt"/><text x="8" y="15">RVT</text></svg><h3>Plan de structure: 0. Niveau -1 - Projet1</h3><button aria-label="Réduire"><svg><use href="#w-min"/></svg></button><button aria-label="Agrandir"><svg><use href="#w-max"/></svg></button><button aria-label="Fermer"><svg><use href="#w-close"/></svg></button></header>
      <div class="client">
        <div class="view">
          <svg class="canvas"><g transform="translate(-11 -36) scale(.38776 .33333)">
            <path class="red" d="M133 385L642 977M637 430L135 1013"/>
            <path class="ink" d="M737 420V530M737 561V591M737 618V734M737 762V792M737 823V932"/>
            <g class="ink"><ellipse cx="737" cy="990" rx="51" ry="59"/><rect x="145" y="622" width="65" height="106"/><ellipse cx="178" cy="695" rx="26" ry="28"/><rect x="434" y="676" width="50" height="24"/><rect x="427" y="700" width="65" height="16"/></g><path class="ink2" d="M448 718h21"/>
          </g><text x="275" y="301" class="mark m18">1</text></svg>
          <strong class="stamp projet">PROJET</strong>
          <div class="navbar"><i class="dot">×</i><svg class="wheel"><use href="#wheel"/><text x="11" y="22">2D</text></svg><i class="tri"></i><hr><svg class="zsq"><use href="#zoomsq"/></svg><i class="tri"></i><i class="dot last">−</i></div>
        </div>
        <div class="vscroll"><i class="up"></i><i class="knob"></i><i class="down"></i></div>
        <footer class="status"><span>1 : 20</span><svg><use href="#s-detail"/></svg><svg><use href="#s-solid"/></svg><svg><use href="#s-sun"/></svg><svg><use href="#s-shadow"/></svg><svg><use href="#s-crop"/></svg><svg><use href="#s-cropb"/></svg><svg><use href="#s-glass"/></svg><svg><use href="#s-bulb"/></svg><svg><use href="#s-film"/></svg><svg><use href="#s-fence"/></svg><svg><use href="#s-lock"/></svg><div class="hscroll"><i class="left"></i><i class="knob"></i><i class="right"></i></div><i class="grip"></i></footer>
      </div>
    </section>

    <section class="win w4 active">
      <header class="bar"><svg class="doc"><use href="#rvt"/><text x="8" y="15">RVT</text></svg><h3>Plan de structure: 1. Niveau 0 - Projet1</h3><button aria-label="Réduire"><svg><use href="#w-min"/></svg></button><button aria-label="Agrandir"><svg><use href="#w-max"/></svg></button><button aria-label="Fermer"><svg><use href="#w-close"/></svg></button></header>
      <div class="client">
        <div class="view">
          <svg class="canvas"><g transform="translate(-13 -28) scale(.38903 .33333)">
            <path class="red" d="M267 303L712 822M719 262L278 833"/>
            <path class="ink" d="M782 336V393M782 402V430M782 453V480M782 505V600M782 624V648M782 672V767"/>
            <g class="ink"><ellipse cx="784" cy="816" rx="43" ry="49"/><rect x="289" y="508" width="52" height="87"/><ellipse cx="315" cy="567" rx="21" ry="23"/><rect x="530" y="553" width="42" height="18"/><rect x="525" y="571" width="52" height="15"/>
            <rect x="1135" y="466" width="23" height="64"/><rect x="1047" y="563" width="63" height="24"/><rect x="1122" y="553" width="41" height="18"/><rect x="1115" y="571" width="53" height="15"/><rect x="1189" y="563" width="54" height="24"/><rect x="1135" y="601" width="23" height="70"/></g>
            <path class="pale" d="M782 397H912M905 385V440"/>
            <rect x="880" y="508" width="52" height="87" fill="#7c9be0" class="sel"/>
            <rect x="890" y="400" width="34" height="40" fill="#dff6ff" class="sel"/><path class="sel" d="M893 436l28-32M829 411v29M862 411v29M829 425h33"/>
            <g class="sel"><path d="M900 487h16l8 16-8 17h-16l-9-17zM970 547h20l9 20-9 20h-20l-9-20z"/><ellipse cx="827" cy="567" rx="33" ry="38"/><path d="M896 632l11-4 14 8 11 24-11 24-14 5-15-8-10-18v-14z"/><path d="M905 440V567"/></g>
            <rect x="890" y="548" width="34" height="38" fill="#fff" class="sel"/><path d="M907 552v31M892 567h31" stroke="#0a3fc0" stroke-width="2"/><rect x="901" y="560" width="12" height="14" fill="#0a3fc0"/>
            <ellipse cx="782" cy="391" rx="8" ry="9" fill="#3a7fd0" class="sel"/><ellipse cx="905" cy="433" rx="8" ry="9" fill="#3a7fd0" class="sel"/>
          </g><text x="339" y="82" text-anchor="middle" class="note">Extérieur</text><text x="328" y="99" class="note">125.0</text><text x="301" y="98" class="note bl">373.6</text><text x="292" y="250" class="mark m16">1</text></svg>
          <div class="navbar"><i class="dot">×</i><svg class="wheel"><use href="#wheel"/><text x="11" y="22">2D</text></svg><i class="tri"></i><hr><svg class="zsq"><use href="#zoomsq"/></svg><i class="tri"></i><i class="dot last">−</i></div>
        </div>
        <div class="vscroll"><i class="up"></i><i class="knob"></i><i class="down"></i></div>
        <footer class="status"><span>1 : 20</span><svg><use href="#s-detail"/></svg><svg><use href="#s-solid"/></svg><svg><use href="#s-sun"/></svg><svg><use href="#s-shadow"/></svg><svg><use href="#s-crop"/></svg><svg><use href="#s-cropb"/></svg><svg><use href="#s-glass"/></svg><svg><use href="#s-bulb"/></svg><svg><use href="#s-film"/></svg><svg><use href="#s-fence"/></svg><svg><use href="#s-lock"/></svg><div class="hscroll"><i class="left"></i><i class="knob"></i><i class="right"></i></div><i class="grip"></i></footer>
      </div>
    </section>

    <section class="win w5">
      <header class="bar"><svg class="doc"><use href="#rvt"/><text x="8" y="15">RVT</text></svg><h3>Elévation: Sud - Projet1</h3><button aria-label="Réduire"><svg><use href="#w-min"/></svg></button><button aria-label="Agrandir"><svg><use href="#w-max"/></svg></button><button aria-label="Fermer"><svg><use href="#w-close"/></svg></button></header>
      <div class="client">
        <div class="view">
          <svg class="canvas"><g transform="translate(-11 -28) scale(.38776 .33333)">
            <path class="ink" d="M27 601H1257M737 260V329M737 352V372M737 394V476M737 498V518M737 540V624M737 646V666M737 688V773M737 795V815M737 838V920M737 942V962M737 985V1067M737 1089V1110"/>
            <g class="ink"><ellipse cx="737" cy="216" rx="38" ry="44"/><rect x="324" y="470" width="21" height="53"/><rect x="249" y="550" width="52" height="21"/><rect x="310" y="544" width="37" height="16"/><rect x="306" y="560" width="46" height="11"/><rect x="370" y="550" width="47" height="21"/><rect x="324" y="587" width="21" height="56"/><ellipse cx="465" cy="539" rx="29" ry="33"/><ellipse cx="535" cy="459" rx="21" ry="26"/><path d="M590 519h17l8 20-8 18h-17l-8-18zM522 593h28l-7 17h-15z"/><ellipse cx="535" cy="540" rx="18" ry="20"/><ellipse cx="1048" cy="540" rx="17" ry="20"/><circle cx="1062" cy="557" r="6"/></g>
            <path class="red" d="M138 289L683 822M622 289L138 851"/>
            <g class="ink2"><rect x="513" y="516" width="45" height="76"/><rect x="1027" y="516" width="45" height="76"/></g><path d="M526 528h18v25h-18zM1039 528h18v25h-18z"/>
            <g class="sel" fill="#7c9be0"><rect x="826" y="544" width="37" height="14"/><rect x="821" y="558" width="47" height="13"/><path d="M838 558v13M850 558v13"/></g>
            <ellipse cx="1280" cy="598" rx="24" ry="28" fill="#fff" class="sel"/><path fill="#0a3fc0" d="M1280 598V570A24 28 0 001256 598zM1280 598V626A24 28 0 001304 598z"/>
          </g><text x="275" y="49" class="mark m13">1</text><text x="467" y="167" text-anchor="end" class="level">Niveau 0</text><text x="467" y="183" text-anchor="end" class="level">0</text></svg>
          <div class="navbar"><i class="dot">×</i><svg class="wheel"><use href="#wheel"/><text x="11" y="22">2D</text></svg><i class="tri"></i><hr><svg class="zsq"><use href="#zoomsq"/></svg><i class="tri"></i><i class="dot last">−</i></div>
        </div>
        <div class="vscroll"><i class="up"></i><i class="knob"></i><i class="down"></i></div>
        <footer class="status"><span>1 : 20</span><svg><use href="#s-detail"/></svg><svg><use href="#s-solid"/></svg><svg><use href="#s-sun"/></svg><svg><use href="#s-shadow"/></svg><svg><use href="#s-cropx"/></svg><svg><use href="#s-cropb"/></svg><svg><use href="#s-glass"/></svg><svg><use href="#s-bulb"/></svg><svg><use href="#s-film"/></svg><svg><use href="#s-fence"/></svg><svg><use href="#s-lock"/></svg><div class="hscroll"><i class="left"></i><i class="knob"></i><i class="right"></i></div><i class="grip"></i></footer>
      </div>
    </section>

    <svg class="frames" viewBox="0 0 1207 817" preserveAspectRatio="none" aria-hidden="true">
      <path d="M3.500 2.500H602.500V413.500H3.500z" stroke="#ed1c24"/>
      <path d="M609.500 3.500L1198 2.500L1201.500 813.500H8L4.500 416.500H613.500z" stroke="#22b14c"/>
    </svg>
  </div>

  <aside class="browser"><header class="dock-title"><h2>A</h2></header><div class="tree"><i></i><i class="gap"></i><i></i><i></i><i></i></div></aside>
</main>
</body>
</html>
```
FILE: styles.css
```css
* { box-sizing: border-box; }
body { margin: 0; height: 100vh; display: flex; flex-direction: column; overflow: hidden; background: #f0f0f0; color: #1a1a1a; font: 11px/15px "Open Sans", "Noto Sans", sans-serif; }
button, input, select { font: inherit; color: inherit; margin: 0; padding: 0; border: 0; background: none; border-radius: 0; }
h2, h3 { margin: 0; font: inherit; }
i { font-style: normal; }
svg { display: block; flex: none; }
.sprite { position: absolute; width: 0; height: 0; }
.tri { flex: none; width: 0; height: 0; border: 3px solid transparent; border-top: 4px solid #444; border-bottom: 0; }

/* ribbon tabs */
.tabs { display: flex; gap: 1px; height: 25px; padding-top: 5px; background: #d4d4d4; flex: none; overflow: hidden; }
.tab { padding: 0 10px 2px; color: #333; white-space: nowrap; height: 20px; }
.tab.file { background: #2a7ab5; color: #fff; padding: 0 9px 2px 3px; margin-right: 2px; }
.tab.current { background: #e4eed5; color: #111; }

/* ribbon */
.ribbon { display: grid; grid-template-columns: 85px 64px 87px 156px 238px 65px 56px 82px 62px 98px 168px 110px; height: 96px; flex: none; background: #e4eed5; border-bottom: 1px solid #cdd0cb; overflow: hidden; }
.panel { display: flex; flex-direction: column; background: #f5f5f5; border-right: 1px solid #e4eed5; min-width: 0; }
.panel h2 { height: 20px; display: flex; justify-content: center; align-items: center; gap: 6px; color: #333; white-space: nowrap; padding-bottom: 2px; }
.panel .select-title { justify-content: flex-start; padding-left: 1px; }
.select-title .tri { border-width: 4px 4px 0; }
.tools { height: 75px; padding-top: 3px; display: flex; }
.center { justify-content: center; gap: 6px; }
.panel.context { border-right: 1px solid #fff; }
.panel.context h2 { background: #e4eed5; }
.panel.context:nth-child(9) { border-left: 4px solid #e4eed5; }
.big { display: flex; flex-direction: column; align-items: center; min-width: 52px; height: 72px; color: #222; padding-top: 3px; white-space: nowrap; gap: 3px; }
.big.off { color: #b0b0b0; }
.big svg { width: 30px; height: 32px; }
.big .i-cur { width: 16px; height: 22px; margin: 5px 0; }
.pressed { border: 1px solid #1565b8; background: linear-gradient(#bdd7f2, #aacbed); }
.big.pressed { padding-top: 2px; }
.stack { flex-direction: column; align-items: center; }
.large { width: 38px; height: 36px; display: flex; align-items: center; justify-content: center; }
.large svg { width: 32px; height: 32px; }
.small { width: 25px; height: 24px; display: flex; align-items: center; justify-content: center; }
.small svg, .line svg { width: 16px; height: 16px; }
.col { display: flex; flex-direction: column; }
.paste-tools { padding-left: 4px; gap: 1px; }
.big .tri { border-top-color: #999; margin-top: -4px; }
.geo-tools .wide { width: 91px; padding-left: 7px; }
.geo-tools > .tri { align-self: center; margin-left: 3px; }
.line { display: flex; align-items: center; gap: 5px; height: 24px; color: #222; white-space: nowrap; }
.line .tri { margin-left: 3px; }
.modify-tools { padding-left: 3px; gap: 1px; }
.larges { display: grid; grid-template-columns: repeat(4, 39px); grid-auto-rows: 36px; }
.smalls { display: grid; grid-template-columns: repeat(3, 25px); grid-auto-rows: 24px; }
.view-tools { display: grid; grid-template-columns: 25px 12px 25px; grid-auto-rows: 24px; align-items: center; padding-left: 2px; }
.measure-tools { display: grid; grid-template-columns: 42px 10px; grid-auto-rows: 36px; align-items: center; padding-left: 2px; }
.create-tools { display: grid; grid-template-columns: 38px 38px; grid-auto-rows: 36px; padding-left: 3px; }

/* options bar */
.options { display: flex; align-items: center; height: 26px; flex: none; background: #f5f5f5; padding-left: 3px; }
.mode { width: 182px; border-right: 1px solid #999; padding: 3px 0; }
.options label { margin: 0 4px 0 12px; }
.options input { width: 120px; height: 23px; border: 1px solid #e0e0e4; border-radius: 2px; background: #fff; padding: 0 5px; }

/* properties palette */
.main { flex: 1; display: flex; min-height: 0; }
.props { width: 368px; margin-left: -2px; flex: none; background: #fff; display: flex; flex-direction: column; border-right: 1px solid #ddd; }
.dock-title { height: 19px; display: flex; align-items: center; justify-content: space-between; background: #bfcddb; color: #42505e; flex: none; }
.dock-title button { width: 10px; height: 10px; margin-right: 4px; }
.type { display: flex; align-items: center; text-align: left; margin: 2px 0 0 0; height: 73px; border: 1px solid #0f62b8; border-top-width: 2px; background: linear-gradient(#cfeaf9, #c5e6f8); color: #33404c; line-height: 16px; }
.thumb { width: 64px; height: 66px; background: #fff; border: 1px solid #ccc; display: flex; align-items: center; justify-content: center; margin-right: 5px; }
.thumb svg { width: 40px; height: 26px; }
.type-name { flex: 1; }
.type .tri { margin-right: 2px; border-width: 4px 4px 0; }
.filter { display: flex; align-items: center; height: 25px; background: #f0f0f0; }
.combo { width: 249px; height: 23px; display: flex; align-items: center; border: 1px solid #777; border-radius: 0 3px 3px 0; background: linear-gradient(#f2f2f2 45%, #dfe2e4 50%, #cfd3d6); }
.combo select { appearance: none; flex: 1; height: 21px; padding-left: 1px; outline: 0; }
.combo .tri { border-width: 4px 4px 0; border-top-color: #111; margin-right: 4px; }
.edit-type { display: flex; align-items: center; gap: 6px; height: 20px; align-self: flex-start; margin-left: 6px; white-space: nowrap; }
.edit-type svg { width: 16px; height: 16px; }
.params { width: 367px; table-layout: fixed; border-collapse: separate; border-spacing: 0; }
.c-name { width: 177px; }
.c-btn { width: 12px; }
.params tr { height: 18px; }
.params th, .params td { height: 18px; padding: 0 0 0 3px; font-weight: normal; text-align: left; vertical-align: top; white-space: nowrap; line-height: 14px; border-bottom: 1px dotted #777; border-right: 1px dotted #777; overflow: hidden; }
.params th { padding-left: 5px; }
.params td:last-child { padding: 0 0 0 1px; }
.params .group th, .params .group td { background: #dadada; border-color: #dadada; line-height: 17px; vertical-align: middle; }
.params .group th { padding-left: 1px; }
.params .group svg { width: 8px; height: 10px; margin-left: -2px; }
.ro { color: #707070; }
.params input:not([type]) { display: block; width: 100%; height: 14px; outline: 0; }
.params .focus { border: 1px solid #000; padding-left: 2px; }
.params .focus input { height: 13px; }
.params input[type=checkbox] { appearance: none; display: block; width: 13px; height: 13px; margin: 3px 0 0 1px; border: 1px solid #8e8f8f; background: linear-gradient(135deg, #d0d4da, #fff); outline: 1px solid #f4f4f4; outline-offset: -2px; }
.params input[type=checkbox]:checked::after { content: "✓"; display: block; font: bold 11px/11px "DejaVu Sans", sans-serif; color: #aaa; }
.assoc { display: block; width: 10px; height: 16px; border: 1px solid #777; border-right-width: 2px; border-radius: 2px; background: linear-gradient(90deg, #f8f8f8, #ccc); }

/* MDI area: three views above, two below */
.mdi { position: relative; flex: 1; min-width: 0; margin-left: 5px; border-left: 2px solid #777; padding: 3px 5px 5px 1px; background: #e8edf2; display: grid; grid-template-columns: 322fr 276fr 595fr; grid-template-rows: 407fr 400fr; }
.frames { position: absolute; left: -4px; top: -2px; width: calc(100% + 8px); height: calc(100% + 2px); pointer-events: none; }
.frames path { fill: none; stroke-width: 5px; shape-rendering: crispEdges; }
.win { display: flex; flex-direction: column; min-width: 0; min-height: 0; padding: 0 7px 7px 8px; border-right: 1px solid #444c55; border-bottom: 2px solid #444c55; background: linear-gradient(#bfcddb, #d7e4f2 30px); }
.w2 { padding-bottom: 4px; }
.w3, .w5 { border-right-color: #b9c6d4; }
.w4 { grid-column: 1 / 3; border-right: 2px solid #222; padding-right: 9px; }
.w4, .w5 { border-bottom: 0; padding-bottom: 2px; }
.active { background: linear-gradient(#99b4d1, #b9d1ea 30px); }
.bar { display: flex; align-items: center; gap: 3px; height: 30px; padding: 4px 0 0 1px; flex: none; color: #434e59; }
.active .bar { color: #0a0a0a; }
.doc { width: 16px; height: 16px; margin-right: 1px; }
.doc text { font: bold 6px "Liberation Sans", sans-serif; fill: #fff; text-anchor: middle; }
.bar h3 { flex: 1; min-width: 0; overflow: hidden; white-space: nowrap; }
.bar button { flex: none; width: 30px; height: 17px; border: 1px solid #75859b; border-radius: 2px; box-shadow: inset 0 0 0 1px rgba(255, 255, 255, .5); }
.bar button svg { width: 28px; height: 15px; }
.active .bar button:last-child { background: linear-gradient(#dd8b7c, #b93b28 55%, #c9523e); border-color: #5a2019; }
.client { flex: 1; min-height: 0; display: grid; grid-template-columns: 1fr 16px; grid-template-rows: 1fr 18px; border: 1px solid; border-color: #555 #fff #fff #777; background: #f0f0f0; }
.view { position: relative; background: #fff; overflow: hidden; }
.canvas { position: absolute; width: 100%; height: 100%; }
.canvas path, .canvas rect, .canvas circle, .canvas ellipse { vector-effect: non-scaling-stroke; shape-rendering: crispEdges; }
.ref, .refc, .ink, .ink2, .red, .blue, .soft, .pale { fill: none; }
.ref { stroke: #008000; stroke-dasharray: 9 9; }
.refc { stroke: #008000; }
.ink { stroke: #000; }
.ink2 { stroke: #000; stroke-width: 2px; }
.red { stroke: #f00; }
.blue { stroke: #00f; }
.soft { stroke: #777; }
.sel { stroke: #0a3fc0; }
g.sel:not([fill]), path.sel { fill: none; }
.pale { stroke: #8fb0f0; }
.tiny { font: bold 5px "Liberation Sans", sans-serif; fill: #00f; }
.mark { font-family: Roboto, sans-serif; text-anchor: middle; fill: #000; }
.m18 { font-size: 18px; }
.m16 { font-size: 16px; }
.m13 { font-size: 13px; }
.note { font: 11px "Liberation Sans", sans-serif; fill: #555; }
.bl { fill: #0a3fc0; }
.level { font: 10px "Liberation Sans", sans-serif; fill: #111; }
.stamp { position: absolute; font: 28px/32px Lato, sans-serif; }
.famille { left: 60px; top: 11px; color: #ed1c24; }
.projet { left: 96px; top: 29px; color: #22b14c; }
.navbar { position: absolute; top: 1px; right: 0; width: 36px; height: 117px; border: 2px solid #c2c2c2; border-radius: 5px; background: #f4f4f4; display: flex; flex-direction: column; align-items: center; padding: 1px 2px; }
.navbar .tri { border-top-color: #888; margin-top: 5px; }
.navbar hr { width: 26px; height: 1px; border: 0; background: #bbb; margin: 4px 0 7px; flex: none; }
.wheel { width: 26px; height: 24px; margin-top: 8px; }
.wheel text { font: bold 9px "Open Sans", sans-serif; fill: #7f9fc4; }
.zsq { width: 18px; height: 18px; margin-bottom: 3px; }
.dot { width: 9px; height: 9px; border-radius: 50%; background: #bbb; color: #fff; font: bold 8px/9px "DejaVu Sans", sans-serif; text-align: center; align-self: flex-end; flex: none; }
.dot.last { margin-top: auto; margin-bottom: 1px; }
.vscroll { display: flex; flex-direction: column; align-items: center; justify-content: space-between; padding: 7px 0 6px; background: #ededed; }
.knob { width: 15px; height: 15px; border: 1px solid #979797; border-radius: 2px; background: linear-gradient(90deg, #f4f4f4 45%, #cfcfd2); }
.up { border: 4px solid transparent; border-bottom-color: #333; border-top: 0; }
.down { border: 4px solid transparent; border-top-color: #333; border-bottom: 0; }
.left { border: 4px solid transparent; border-right-color: #333; border-left: 0; }
.right { border: 4px solid transparent; border-left-color: #333; border-right: 0; }
.status { grid-column: 1 / 3; display: flex; align-items: center; gap: 5px; padding: 0 0 2px 27px; color: #111; overflow: hidden; }
.status span { width: 47px; flex: none; }
.status svg { width: 16px; height: 16px; }
.hscroll { flex: 1; height: 16px; display: flex; align-items: center; justify-content: space-between; background: #ededed; padding: 0 5px; }
.hscroll.tight { padding: 0; gap: 5px; justify-content: center; }
.hscroll .knob { background: linear-gradient(#f4f4f4 45%, #cfcfd2); }
.grip { width: 14px; height: 10px; background: radial-gradient(circle, #bbb 1px, transparent 1px) 0 0 / 4px 4px; clip-path: polygon(80% 0, 80% 100%, 0 100%); }

/* docked project browser, cut by the window edge */
.browser { width: 6px; flex: none; overflow: hidden; background: #fff; border-left: 1px solid #999; }
.browser .dock-title { padding-left: 3px; }
.tree { border-left: 1px solid #555; border-top: 1px solid #555; margin-top: 2px; height: 100%; padding-top: 7px; display: flex; flex-direction: column; align-items: flex-end; gap: 10px; }
.tree i { width: 1px; height: 8px; background: #888; flex: none; }
.tree .gap { height: 280px; background: none; }
```
